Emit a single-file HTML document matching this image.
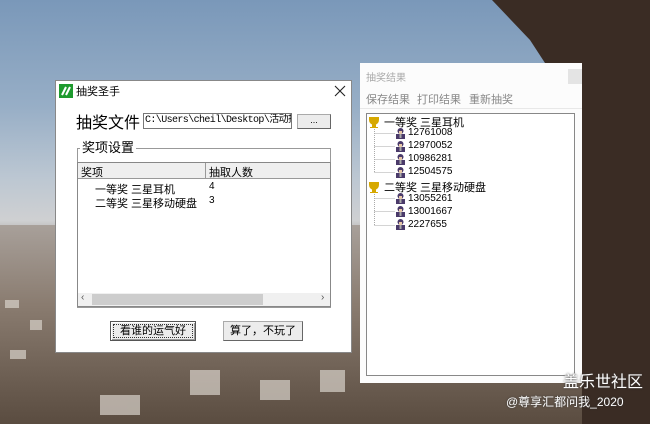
<!DOCTYPE html>
<html><head><meta charset="utf-8"><style>
*{margin:0;padding:0;box-sizing:border-box}
body{width:650px;height:424px;overflow:hidden;position:relative;font-family:"Liberation Sans","Noto Sans CJK SC",sans-serif;font-size:11px;color:#000;
background:linear-gradient(180deg,#7a98b9 0%,#97aec6 25%,#bcc7d2 42%,#cfd0d2 52%,#9c9690 58%,#7d7268 75%,#5a4d42 100%)}
.abs{position:absolute}
.t{position:absolute;white-space:nowrap}
</style></head><body>
<svg class="abs" style="left:0;top:0" width="650" height="424">
<defs><linearGradient id="c" x1="0" y1="0" x2="0" y2="1"><stop offset="0" stop-color="#a8a09a"/><stop offset="0.4" stop-color="#8a7c70"/><stop offset="1" stop-color="#5a4c40"/></linearGradient></defs>
<rect x="0" y="225" width="650" height="199" fill="url(#c)"/>
<g fill="#d8d2ca" opacity=".7"><rect x="5" y="300" width="14" height="8"/><rect x="30" y="320" width="12" height="10"/><rect x="10" y="350" width="16" height="9"/><rect x="190" y="370" width="30" height="25"/><rect x="260" y="380" width="30" height="20"/><rect x="320" y="370" width="25" height="22"/><rect x="100" y="395" width="40" height="20"/></g>
<path d="M492 0 L650 0 L650 424 L582 424 L582 63 L545 63 L530 40 Z" fill="#3a2c24"/>
</svg>

<!-- main dialog -->
<div class="abs" style="left:55px;top:80px;width:297px;height:273px;background:#fff;border:1px solid #888">
 <div class="abs" style="left:3px;top:3px;width:14px;height:14px;background:#1e9a2e"><svg width="14" height="14"><path d="M3 11 L7 3 M7 11 L11 3" stroke="#fff" stroke-width="2"/></svg></div>
 <div class="t" style="left:20px;top:2px;font-size:11px">抽奖圣手</div>
 <svg class="abs" style="left:278px;top:4px" width="12" height="12"><path d="M1 1 L11 11 M11 1 L1 11" stroke="#222" stroke-width="1.1"/></svg>
 <div class="t" style="left:20px;top:28px;font-size:16px">抽奖文件</div>
 <div class="abs" style="left:87px;top:32px;width:149px;height:16px;border:1px solid #777;font-family:'Liberation Mono','Noto Sans CJK SC',monospace;font-size:10px;line-height:14px;padding-left:1px;white-space:nowrap;overflow:hidden;letter-spacing:-0.6px">C:\Users\cheil\Desktop\活动抽</div>
 <div class="abs" style="left:241px;top:33px;width:34px;height:15px;background:#ececec;border:1px solid #aaa;border-right-color:#666;border-bottom-color:#666;text-align:center;font-size:9px;line-height:11px">...</div>
 <div class="abs" style="left:21px;top:67px;width:254px;height:160px;border:1px solid #999"></div>
 <div class="t" style="left:24px;top:56px;font-size:13px;background:#fff;padding:0 2px">奖项设置</div>
 <div class="abs" style="left:21px;top:81px;width:254px;height:145px;border:1px solid #888;background:#fff">
  <div class="abs" style="left:0;top:0;width:252px;height:16px;background:#efefef;border-bottom:1px solid #999"></div>
  <div class="abs" style="left:127px;top:0;width:1px;height:16px;background:#999"></div>
  <div class="t" style="left:3px;top:1px;font-size:11px">奖项</div>
  <div class="t" style="left:131px;top:1px;font-size:11px">抽取人数</div>
  <div class="t" style="left:17px;top:18px;font-size:11px">一等奖 三星耳机</div>
  <div class="t" style="left:131px;top:18px;font-size:10px">4</div>
  <div class="t" style="left:17px;top:32px;font-size:11px">二等奖 三星移动硬盘</div>
  <div class="t" style="left:131px;top:32px;font-size:10px">3</div>
  <div class="abs" style="left:0;top:130px;width:252px;height:13px;background:#f0f0f0"></div>
  <div class="abs" style="left:14px;top:131px;width:171px;height:11px;background:#cdcdcd"></div>
  <div class="t" style="left:3px;top:129px;font-size:10px;color:#555">‹</div>
  <div class="t" style="left:243px;top:129px;font-size:10px;color:#555">›</div>
 </div>
 <div class="abs" style="left:54px;top:240px;width:86px;height:20px;background:#ececec;border:1px solid #555;box-shadow:inset 1px 1px #fff,inset -1px -1px #999"><div style="border:1px dotted #333;margin:2px;height:14px;text-align:center;font-size:11px;line-height:13px">看谁的运气好</div></div>
 <div class="abs" style="left:167px;top:240px;width:80px;height:20px;background:#ececec;border:1px solid #aaa;border-right-color:#666;border-bottom-color:#666;text-align:center;font-size:11px;line-height:18px">算了，不玩了</div>
</div>

<!-- results window -->
<div class="abs" style="left:360px;top:63px;width:222px;height:320px;background:#fcfcfc">
 <div class="t" style="left:6px;top:6px;color:#aaa;font-size:10px">抽奖结果</div>
 <div class="abs" style="left:208px;top:6px;width:14px;height:15px;background:#e4e4e4"></div>
 <div class="t" style="left:6px;top:28px;color:#888;font-size:11px">保存结果</div>
 <div class="t" style="left:57px;top:28px;color:#888;font-size:11px">打印结果</div>
 <div class="t" style="left:109px;top:28px;color:#888;font-size:11px">重新抽奖</div>
 <div class="abs" style="left:0;top:45px;width:222px;height:1px;background:#e8e8e8"></div>
 <div class="abs" style="left:6px;top:50px;width:209px;height:263px;border:1px solid #888;background:#fff">
  <svg class="abs" style="left:0;top:0" width="100" height="130">
   <defs><g id="p"><circle cx="5.5" cy="3" r="3" fill="#4a3a6a"/><rect x="4" y="3" width="3" height="3" fill="#e8c8a8"/><path d="M1 6 h9 v5 h-9z" fill="#4a3a6a"/><rect x="4.5" y="6" width="2" height="4" fill="#aaa"/></g>
   <g id="tr" fill="#d6a800"><path d="M1 0 h10 v3 a5 5 0 0 1 -10 0z M4 7 h4 v3 h2 v1 h-8 v-1 h2z"/></g></defs>
   <use href="#tr" x="1" y="3"/><use href="#tr" x="1" y="68"/>
   <g stroke="#aaa" stroke-dasharray="1 1" fill="none"><path d="M7.5 15 V58 M7.5 19.5H28 M7.5 32.5H28 M7.5 45.5H28 M7.5 58.5H28 M7.5 80 V111 M7.5 84.5H28 M7.5 97.5H28 M7.5 111.5H28"/></g>
   <use href="#p" x="28" y="14"/><use href="#p" x="28" y="27"/><use href="#p" x="28" y="40"/><use href="#p" x="28" y="53"/>
   <use href="#p" x="28" y="79"/><use href="#p" x="28" y="92"/><use href="#p" x="28" y="105"/>
  </svg>
  <div class="t" style="left:17px;top:0px;font-size:11px">一等奖 三星耳机</div>
  <div class="t" style="left:41px;top:13px;font-size:10px">12761008</div>
  <div class="t" style="left:41px;top:26px;font-size:10px">12970052</div>
  <div class="t" style="left:41px;top:39px;font-size:10px">10986281</div>
  <div class="t" style="left:41px;top:52px;font-size:10px">12504575</div>
  <div class="t" style="left:17px;top:65px;font-size:11px">二等奖 三星移动硬盘</div>
  <div class="t" style="left:41px;top:79px;font-size:10px">13055261</div>
  <div class="t" style="left:41px;top:92px;font-size:10px">13001667</div>
  <div class="t" style="left:41px;top:105px;font-size:10px">2227655</div>
 </div>
</div>

<div class="t" style="left:563px;top:368px;color:#fff;font-size:16px;text-shadow:0 0 2px #333">盖乐世社区</div>
<div class="t" style="left:506px;top:393px;color:#fff;font-size:12px;text-shadow:0 0 2px #333">@尊享汇都问我_2020</div>
</body></html>
